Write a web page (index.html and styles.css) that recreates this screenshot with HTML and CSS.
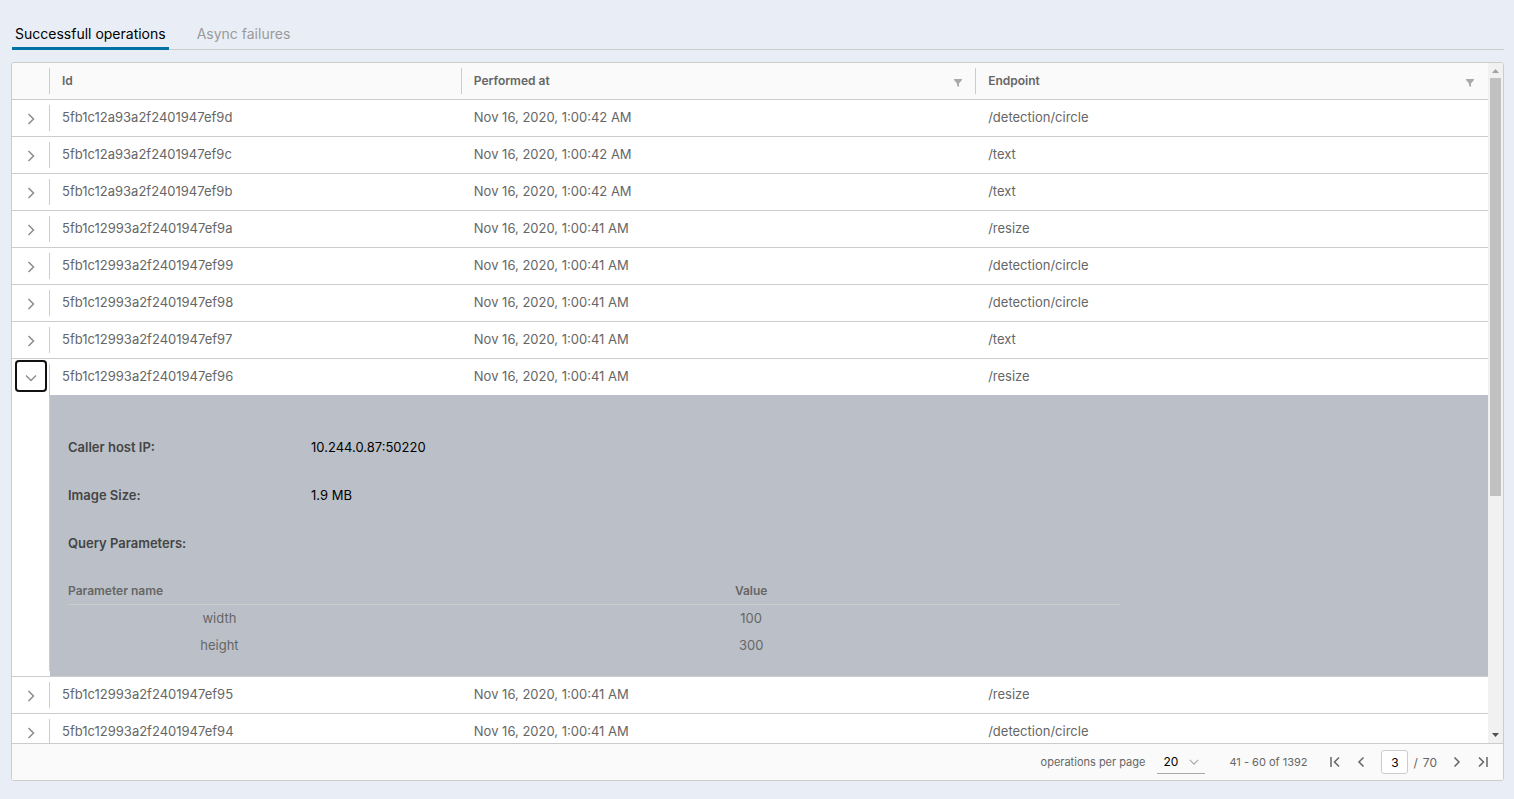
FILE: index.html
```html
<!DOCTYPE html>
<html lang="en">
<head>
<meta charset="utf-8">
<title>Operations</title>
<link rel="stylesheet" href="styles.css">
</head>
<body>
<svg class="sprite" aria-hidden="true">
  <symbol id="chevron" viewBox="0 0 12 12"><path d="M3.500 1l5 5-5 5" fill="none" stroke="currentColor" stroke-width="1.500"/></symbol>
  <symbol id="chevron-down" viewBox="0 0 12 12"><path d="M1 3.500l5 5 5-5" fill="none" stroke="currentColor" stroke-width="1.400"/></symbol>
  <symbol id="first" viewBox="0 0 12 12"><path d="M2 1v10M10 1.500L5.500 6l4.500 4.500" fill="none" stroke="currentColor" stroke-width="1.500"/></symbol>
  <symbol id="prev" viewBox="0 0 12 12"><path d="M8.500 1.500L4 6l4.500 4.500" fill="none" stroke="currentColor" stroke-width="1.500"/></symbol>
  <symbol id="next" viewBox="0 0 12 12"><path d="M3.500 1.500L8 6l-4.500 4.500" fill="none" stroke="currentColor" stroke-width="1.500"/></symbol>
  <symbol id="last" viewBox="0 0 12 12"><path d="M10 1v10M2 1.500L6.500 6 2 10.500" fill="none" stroke="currentColor" stroke-width="1.500"/></symbol>
  <symbol id="filter" viewBox="0 0 12 12"><path d="M2 2h8v1L7 6.500V10L5 8.800V6.500L2 3z" fill="currentColor"/></symbol>
</svg>
<main class="page">
  <div class="tabs" role="tablist">
    <button class="tab tab-active" role="tab" aria-selected="true">Successfull operations</button>
    <button class="tab" role="tab" aria-selected="false">Async failures</button>
  </div>
  <section class="datagrid">
    <div class="viewport">
      <div class="scroll-content">
        <table class="grid">
          <colgroup><col class="col-caret"><col class="col-id"><col class="col-date"><col></colgroup>
          <thead>
            <tr>
              <th aria-label="Expand"></th>
              <th>Id</th>
              <th><div class="head-cell">Performed at<button class="filter" aria-label="Filter performed at"><svg><use href="#filter"/></svg></button></div></th>
              <th><div class="head-cell">Endpoint<button class="filter" aria-label="Filter endpoint"><svg><use href="#filter"/></svg></button></div></th>
            </tr>
          </thead>
          <tbody>
            <tr><td><button class="caret" aria-label="Expand row"><svg><use href="#chevron"/></svg></button></td><td>5fb1c12a93a2f2401947ef9d</td><td>Nov 16, 2020, 1:00:42 AM</td><td>/detection/circle</td></tr>
            <tr><td><button class="caret" aria-label="Expand row"><svg><use href="#chevron"/></svg></button></td><td>5fb1c12a93a2f2401947ef9c</td><td>Nov 16, 2020, 1:00:42 AM</td><td>/text</td></tr>
            <tr><td><button class="caret" aria-label="Expand row"><svg><use href="#chevron"/></svg></button></td><td>5fb1c12a93a2f2401947ef9b</td><td>Nov 16, 2020, 1:00:42 AM</td><td>/text</td></tr>
            <tr><td><button class="caret" aria-label="Expand row"><svg><use href="#chevron"/></svg></button></td><td>5fb1c12993a2f2401947ef9a</td><td>Nov 16, 2020, 1:00:41 AM</td><td>/resize</td></tr>
            <tr><td><button class="caret" aria-label="Expand row"><svg><use href="#chevron"/></svg></button></td><td>5fb1c12993a2f2401947ef99</td><td>Nov 16, 2020, 1:00:41 AM</td><td>/detection/circle</td></tr>
            <tr><td><button class="caret" aria-label="Expand row"><svg><use href="#chevron"/></svg></button></td><td>5fb1c12993a2f2401947ef98</td><td>Nov 16, 2020, 1:00:41 AM</td><td>/detection/circle</td></tr>
            <tr><td><button class="caret" aria-label="Expand row"><svg><use href="#chevron"/></svg></button></td><td>5fb1c12993a2f2401947ef97</td><td>Nov 16, 2020, 1:00:41 AM</td><td>/text</td></tr>
            <tr class="open"><td><button class="caret caret-open" aria-label="Collapse row" aria-expanded="true"><svg><use href="#chevron-down"/></svg></button></td><td>5fb1c12993a2f2401947ef96</td><td>Nov 16, 2020, 1:00:41 AM</td><td>/resize</td></tr>
            <tr class="detail-row">
              <td></td>
              <td class="detail" colspan="3">
                <dl class="facts">
                  <dt>Caller host IP:</dt><dd>10.244.0.87:50220</dd>
                  <dt>Image Size:</dt><dd>1.9 MB</dd>
                  <dt>Query Parameters:</dt>
                </dl>
                <table class="params">
                  <thead><tr><th>Parameter name</th><th>Value</th></tr></thead>
                  <tbody>
                    <tr><td>width</td><td>100</td></tr>
                    <tr><td>height</td><td>300</td></tr>
                  </tbody>
                </table>
              </td>
            </tr>
            <tr><td><button class="caret" aria-label="Expand row"><svg><use href="#chevron"/></svg></button></td><td>5fb1c12993a2f2401947ef95</td><td>Nov 16, 2020, 1:00:41 AM</td><td>/resize</td></tr>
            <tr><td><button class="caret" aria-label="Expand row"><svg><use href="#chevron"/></svg></button></td><td>5fb1c12993a2f2401947ef94</td><td>Nov 16, 2020, 1:00:41 AM</td><td>/detection/circle</td></tr>
          </tbody>
        </table>
      </div>
      <div class="scrollbar" aria-hidden="true">
        <svg class="arrow arrow-up" viewBox="0 0 15 15"><path d="M4 10l3.500-4 3.500 4z" fill="currentColor"/></svg>
        <div class="track"><div class="thumb"></div></div>
        <svg class="arrow" viewBox="0 0 15 15"><path d="M4 5l3.500 4L11 5z" fill="currentColor"/></svg>
      </div>
    </div>
    <footer class="footer">
      <label for="page-size">operations per page</label>
      <div class="select-wrap">
        <select id="page-size"><option>20</option></select>
        <svg><use href="#chevron-down"/></svg>
      </div>
      <span class="range">41 - 60 of 1392</span>
      <nav class="pager" aria-label="Pages">
        <button aria-label="First page"><svg><use href="#first"/></svg></button>
        <button aria-label="Previous page"><svg><use href="#prev"/></svg></button>
        <div class="current"><input type="text" value="3" aria-label="Current page"><span>/</span><span>70</span></div>
        <button aria-label="Next page"><svg><use href="#next"/></svg></button>
        <button aria-label="Last page"><svg><use href="#last"/></svg></button>
      </nav>
    </footer>
  </section>
</main>
</body>
</html>
```
FILE: styles.css
```css
* { box-sizing: border-box; }
body {
  margin: 0;
  background: #e9eef6;
  color: #666;
  font-family: Metropolis, Inter, "Liberation Sans", sans-serif;
  font-size: 13px;
}
button {
  padding: 0;
  border: 0;
  background: none;
  color: inherit;
  font: inherit;
}
svg { display: block; width: 12px; height: 12px; }
.sprite { position: absolute; width: 0; height: 0; }
.page {
  display: flex;
  flex-direction: column;
  gap: 12px;
  height: 100vh;
  padding: 18px 10px 18px 11px;
}
.tabs {
  display: flex;
  flex: none;
  gap: 25px;
  height: 32px;
  margin-left: 1px;
  box-shadow: inset 0 -1px #ccc;
}
.tab {
  padding: 0 3px;
  color: #9a9a9a;
  font-size: 14px;
  line-height: 32px;
}
.tab-active { color: #000; box-shadow: inset 0 -3px #0072a3; }
.datagrid {
  display: flex;
  flex: 1;
  flex-direction: column;
  min-height: 0;
  overflow: hidden;
  border: 1px solid #ccc;
  border-radius: 3px;
  background: #fff;
}
.viewport { display: flex; flex: 1; min-height: 0; }
.scroll-content { flex: 1; overflow: hidden; }
.grid, .params { width: 100%; border-spacing: 0; table-layout: fixed; }
.col-caret { width: 38px; }
.col-id { width: 27.9%; }
.col-date { width: 34.85%; }
.grid > * > tr > * {
  height: 37px;
  padding: 0 12px;
  border-bottom: 1px solid #ccc;
  text-align: left;
  line-height: 18px;
}
.grid > thead > tr > th {
  background: #fafafa;
  font-size: 12px;
  font-weight: 600;
}
.grid > thead > tr > th:not(:last-child) {
  background: linear-gradient(#ccc, #ccc) right 5px / 1px 26px no-repeat #fafafa;
}
.grid > tbody > tr > td { padding-bottom: 2px; }
.grid > tbody > tr > td:first-child {
  padding: 0 3px 2px;
  background: linear-gradient(#ccc, #ccc) right 5px / 1px 26px no-repeat;
}
.grid > tbody > .open > td { height: 36px; border-bottom: 0; }
.grid > tbody > .open > td:first-child { background-size: 1px 100%; }
.grid > tbody > .detail-row > td:first-child {
  background-position: right top;
  background-size: 1px calc(100% - 5px);
}
.head-cell { display: flex; align-items: center; justify-content: space-between; }
.filter { padding-top: 3px; color: #aaa; }
.caret {
  display: grid;
  place-items: center;
  width: 32px;
  height: 32px;
  padding-top: 4px;
  color: #8c8c8c;
}
.caret-open { border-radius: 4px; box-shadow: inset 0 0 0 2px #111; }
.grid > tbody > .detail-row > .detail { padding: 28px 18px 17px; background: #bbc0c8; }
.facts {
  display: grid;
  grid-template-columns: 243px 1fr;
  margin: 0 0 12px;
  line-height: 48px;
}
.facts dt { color: #454545; font-weight: 600; }
.facts dd { margin: 0; color: #000; }
.params { width: 75%; }
.params th {
  height: 26px;
  padding: 0;
  border-bottom: 1px solid #ccc;
  font-size: 12px;
  font-weight: 600;
  line-height: 24px;
  vertical-align: top;
}
.params th:first-child { width: 28.8%; text-align: left; }
.params th:last-child, .params td:last-child { padding-left: 12px; text-align: center; }
.params td { height: 27px; padding: 0 0 2px; text-align: center; }
.scrollbar { display: flex; flex: none; flex-direction: column; width: 15px; background: #f1f1f1; }
.arrow { width: 15px; height: 15px; color: #505050; }
.arrow-up { color: #a3a3a3; }
.track { flex: 1; padding: 0 2px; }
.thumb { height: 64.3%; background: #c1c1c1; }
.footer {
  display: flex;
  flex: none;
  align-items: center;
  justify-content: flex-end;
  height: 37px;
  padding-right: 14px;
  border-top: 1px solid #ccc;
  background: #fafafa;
  font-size: 11px;
}
.select-wrap { display: grid; align-items: center; width: 48px; margin: 0 24px 0 12px; }
.select-wrap select {
  grid-area: 1 / 1;
  width: 100%;
  height: 24px;
  padding: 0 6px;
  border: 0;
  border-bottom: 1px solid #aaa;
  background: none;
  color: #000;
  font: inherit;
  font-size: 12px;
  appearance: none;
}
.select-wrap svg { grid-area: 1 / 1; justify-self: end; width: 10px; height: 10px; margin-right: 6px; color: #aaa; pointer-events: none; }
.pager { display: flex; align-items: center; gap: 14px; margin-left: 22px; }
.current { display: flex; align-items: center; gap: 5px; font-size: 12px; }
.current input {
  width: 27px;
  height: 24px;
  padding: 0;
  border: 1px solid #ccc;
  border-radius: 3px;
  background: #fff;
  color: #000;
  font: inherit;
  text-align: center;
}
```
